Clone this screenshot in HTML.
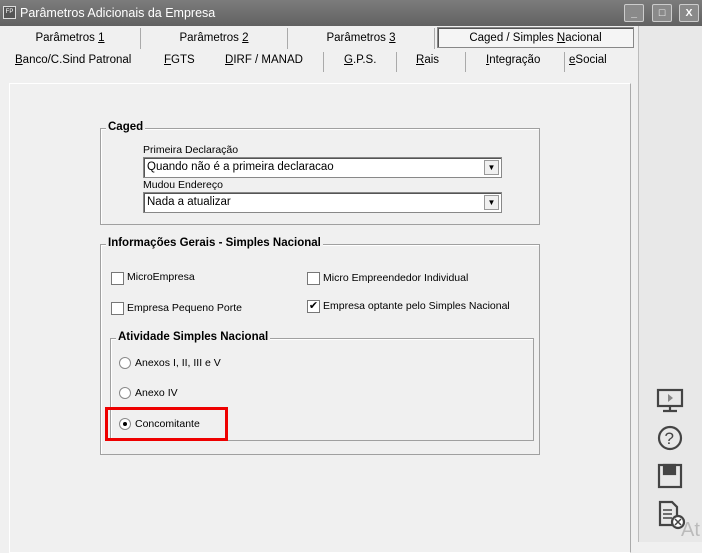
<!DOCTYPE html><html><head><style>
*{margin:0;padding:0;box-sizing:border-box}
body{width:702px;height:542px;overflow:hidden;background:#f0f0f0;font-family:"Liberation Sans",sans-serif;font-size:10.5px;color:#000;position:relative}
.a{position:absolute;white-space:nowrap}
.g{position:absolute;border:1px solid #a0a0a0;box-shadow:1px 1px 0 #fff inset}
.gt{position:absolute;background:#f0f0f0;font-weight:bold;font-size:11.5px;padding:0 2px}
.cb{position:absolute;width:13px;height:13px;border:1px solid #777;background:#fff;font-size:11px;line-height:11px;text-align:center}
.rb{position:absolute;width:12px;height:12px;border-radius:50%;border:1px solid #888;background:#fff}
.sel{position:absolute;height:21px;background:#fff;border:1px solid #888;box-shadow:inset 1px 1px 0 #555;font-size:11.5px;padding:3px 3px}
.dd{position:absolute;right:2px;top:2px;width:15px;height:15px;border:1px solid #999;background:#f0f0f0;font-size:8px;text-align:center;line-height:14px}
.tab{position:absolute;top:28px;height:21px;font-size:11.5px;text-align:center;line-height:21px;border-right:1px solid #aaa}
.t2{position:absolute;top:54px;font-size:11.5px}
.sep{position:absolute;top:52px;width:1px;height:20px;background:#aaa}
.btn{position:absolute;top:4px;width:20px;height:18px;background:#8a8a8a;border:1px solid #ccc;border-radius:2px;color:#fff;text-align:center;font-weight:bold;line-height:16px}
</style></head><body>
<div class="a" style="left:0;top:0;width:702px;height:26px;background:linear-gradient(#7c7c7c,#616161)"></div>
<div class="a" style="left:3px;top:6px;width:13px;height:13px;background:#555;border:1px solid #ddd;color:#fff;font-size:6px;line-height:11px;text-align:center">FP</div>
<div class="a" style="left:20px;top:6px;color:#fff;font-size:12.5px">Parâmetros Adicionais da Empresa</div>
<div class="btn" style="left:624px">_</div><div class="btn" style="left:652px">□</div><div class="btn" style="left:679px">X</div>
<div class="a" style="left:638px;top:26px;width:64px;height:516px;background:#e8e8e8;border-left:1px solid #bbb"></div>
<div class="tab" style="left:0;width:141px">Parâmetros <u>1</u></div>
<div class="tab" style="left:141px;width:147px">Parâmetros <u>2</u></div>
<div class="tab" style="left:288px;width:147px">Parâmetros <u>3</u></div>
<div class="tab" style="left:437px;top:27px;width:197px;background:#f5f5f5;border:1px solid #888;box-shadow:inset 1px 1px 0 #555">Caged / Simples <u>N</u>acional</div>
<div class="t2" style="left:15px"><u>B</u>anco/C.Sind Patronal</div>
<div class="t2" style="left:164px"><u>F</u>GTS</div>
<div class="t2" style="left:225px"><u>D</u>IRF / MANAD</div>
<div class="sep" style="left:323px"></div>
<div class="t2" style="left:344px"><u>G</u>.P.S.</div>
<div class="sep" style="left:396px"></div>
<div class="t2" style="left:416px"><u>R</u>ais</div>
<div class="sep" style="left:465px"></div>
<div class="t2" style="left:486px"><u>I</u>ntegração</div>
<div class="sep" style="left:564px"></div>
<div class="t2" style="left:569px"><u>e</u>Social</div>
<div class="a" style="left:9px;top:83px;width:622px;height:470px;border:1px solid #fff;border-right-color:#aaa"></div>
<div class="g" style="left:100px;top:128px;width:440px;height:97px"></div>
<div class="gt" style="left:106px;top:121px">Caged</div>
<div class="a" style="left:143px;top:144px">Primeira Declaração</div>
<div class="sel" style="left:143px;top:157px;width:359px">Quando não é a primeira declaracao<div class="dd">▼</div></div>
<div class="a" style="left:143px;top:179px">Mudou Endereço</div>
<div class="sel" style="left:143px;top:192px;width:359px">Nada a atualizar<div class="dd">▼</div></div>
<div class="g" style="left:100px;top:244px;width:440px;height:211px"></div>
<div class="gt" style="left:106px;top:237px">Informações Gerais - Simples Nacional</div>
<div class="cb" style="left:111px;top:272px"></div><div class="a" style="left:127px;top:271px">MicroEmpresa</div>
<div class="cb" style="left:307px;top:272px"></div><div class="a" style="left:323px;top:272px">Micro Empreendedor Individual</div>
<div class="cb" style="left:111px;top:302px"></div><div class="a" style="left:127px;top:302px">Empresa Pequeno Porte</div>
<div class="cb" style="left:307px;top:300px">✔</div><div class="a" style="left:323px;top:300px">Empresa optante pelo Simples Nacional</div>
<div class="g" style="left:110px;top:338px;width:424px;height:103px"></div>
<div class="gt" style="left:116px;top:331px">Atividade Simples Nacional</div>
<div class="rb" style="left:119px;top:357px"></div><div class="a" style="left:135px;top:357px">Anexos I, II, III e V</div>
<div class="rb" style="left:119px;top:387px"></div><div class="a" style="left:135px;top:387px">Anexo IV</div>
<div class="rb" style="left:119px;top:418px"><div style="position:absolute;left:3px;top:3px;width:4px;height:4px;border-radius:50%;background:#000"></div></div><div class="a" style="left:135px;top:418px">Concomitante</div>
<div class="a" style="left:105px;top:407px;width:123px;height:34px;border:3px solid #e00"></div>
<svg class="a" style="left:650px;top:380px" width="45" height="150" viewBox="0 0 45 150" fill="none" stroke="#444" stroke-width="2.2">
<rect x="8" y="10" width="24" height="16"/><path d="M20 26v5M13 31h14"/><path d="M18 14l5 4-5 4z" fill="#888" stroke="none"/>
<circle cx="20" cy="58" r="11"/><text x="14.5" y="64" font-size="17" fill="#444" stroke="none" font-family="Liberation Sans">?</text>
<rect x="9" y="85" width="22" height="22"/><rect x="14" y="85" width="11" height="9" fill="#444"/>
<path d="M10 122h12l5 5v18H10z"/><path d="M13 130h9M13 134h9M13 138h9" stroke-width="1.5"/><circle cx="28" cy="142" r="6" fill="#fff"/><path d="M25 139l6 6M31 139l-6 6" stroke-width="1.5"/>
</svg>
<div class="a" style="left:681px;top:519px;color:#bbb;font-size:20px">At</div>
</body></html>
